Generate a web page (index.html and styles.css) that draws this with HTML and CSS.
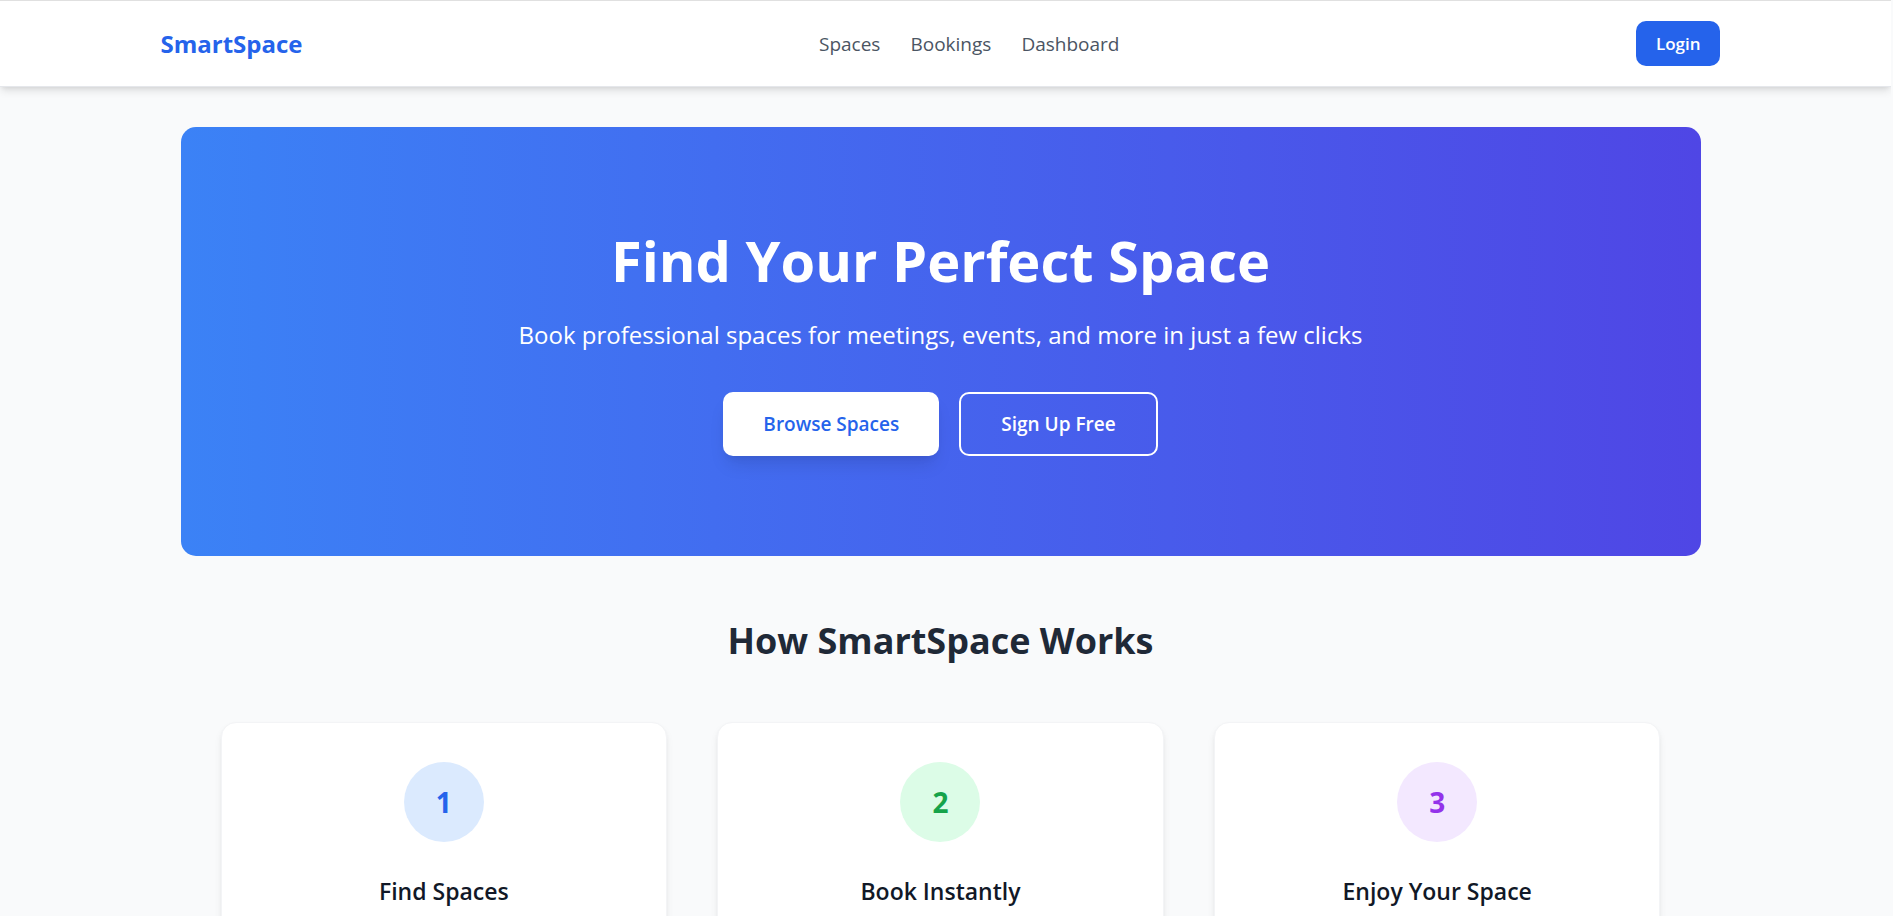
FILE: index.html
```html
<!DOCTYPE html>
<html lang="en">
<head>
<meta charset="utf-8">
<meta name="viewport" content="width=device-width, initial-scale=1">
<title>SmartSpace</title>
<link rel="stylesheet" href="styles.css">
</head>
<body>
<header class="navbar">
  <nav class="navbar-inner">
    <a class="brand" href="#">SmartSpace</a>
    <div class="nav-links">
      <a href="#">Spaces</a>
      <a href="#">Bookings</a>
      <a href="#">Dashboard</a>
    </div>
    <button class="login" type="button">Login</button>
  </nav>
</header>
<main class="container">
  <section class="hero">
    <h1>Find Your Perfect Space</h1>
    <p>Book professional spaces for meetings, events, and more in just a few clicks</p>
    <div class="hero-actions">
      <button class="btn btn-solid" type="button">Browse Spaces</button>
      <button class="btn btn-outline" type="button">Sign Up Free</button>
    </div>
  </section>
  <section class="steps">
    <h2>How SmartSpace Works</h2>
    <div class="step-grid">
      <article class="card">
        <div class="badge badge-blue">1</div>
        <h3>Find Spaces</h3>
      </article>
      <article class="card">
        <div class="badge badge-green">2</div>
        <h3>Book Instantly</h3>
      </article>
      <article class="card">
        <div class="badge badge-purple">3</div>
        <h3>Enjoy Your Space</h3>
      </article>
    </div>
  </section>
</main>
</body>
</html>
```
FILE: styles.css
```css
* {
  box-sizing: border-box;
  margin: 0;
}

html {
  background: #f9fafb;
  overflow: hidden;
}

body {
  margin-right: 2px;
  border-top: 1px solid #e0e0e0;
  background: #f9fafb;
  color: #111827;
  font-family: "Open Sans", "Noto Sans", sans-serif;
}

a {
  color: inherit;
  text-decoration: none;
}

button {
  border: 0;
  font-family: inherit;
  cursor: pointer;
}

.navbar {
  padding-right: 10px;
  border-bottom: 1px solid #e5e7eb;
  background: #fff;
  box-shadow: 0 5px 8px -1px rgba(0, 0, 0, 0.1), 0 2px 5px -2px rgba(0, 0, 0, 0.1);
}

.navbar-inner {
  display: flex;
  justify-content: space-between;
  align-items: center;
  max-width: 1600px;
  margin: 0 auto;
  padding: 20px;
}

.brand {
  color: #2563eb;
  font-size: 24px;
  font-weight: 700;
  line-height: 35px;
}

.nav-links {
  display: flex;
  gap: 30px;
  color: #4b5563;
  font-size: 19px;
  line-height: 30px;
}

.login {
  padding: 10px 20px;
  border-radius: 10px;
  background: #2563eb;
  color: #fff;
  font-size: 17px;
  font-weight: 600;
  line-height: 25px;
}

.container {
  padding: 40px 10px 40px 0;
}

.hero {
  max-width: 1520px;
  margin: 0 auto;
  padding: 100px 40px;
  border-radius: 15px;
  background: linear-gradient(to right, #3b82f6, #4f46e5);
  color: #fff;
  text-align: center;
}

.hero h1 {
  margin-bottom: 24px;
  font-size: 56px;
  font-weight: 700;
  line-height: 66px;
}

.hero p {
  margin-bottom: 40px;
  font-size: 24px;
  line-height: 35px;
}

.hero-actions {
  display: flex;
  justify-content: center;
  gap: 20px;
}

.btn {
  border-radius: 10px;
  padding: 16px 40px;
  font-size: 19px;
  font-weight: 600;
  line-height: 28px;
}

.btn-solid {
  background: #fff;
  color: #2563eb;
  box-shadow: 0 12px 18px -4px rgba(0, 0, 0, 0.1), 0 5px 8px -5px rgba(0, 0, 0, 0.1);
}

.btn-outline {
  border: 2px solid #fff;
  background: transparent;
  color: #fff;
}

.steps {
  max-width: 1520px;
  margin: 0 auto;
  padding: 60px 40px;
}

.steps h2 {
  margin-bottom: 56px;
  color: #1f2937;
  font-size: 36px;
  font-weight: 700;
  line-height: 50px;
  text-align: center;
}

.step-grid {
  display: grid;
  grid-template-columns: repeat(3, 1fr);
  gap: 50px;
}

.card {
  padding: 39px 40px 80px;
  border: 1px solid #f3f4f6;
  border-radius: 15px;
  background: #fff;
  box-shadow: 0 5px 8px -1px rgba(0, 0, 0, 0.08), 0 2px 5px -2px rgba(0, 0, 0, 0.08);
  text-align: center;
}

.badge {
  display: flex;
  justify-content: center;
  align-items: center;
  width: 80px;
  height: 80px;
  margin: 0 auto 32px;
  border-radius: 50%;
  font-size: 28px;
  font-weight: 700;
}

.badge-blue {
  background: #dbeafe;
  color: #2563eb;
}

.badge-green {
  background: #dcfce7;
  color: #16a34a;
}

.badge-purple {
  background: #f3e8ff;
  color: #9333ea;
}

.card h3 {
  font-size: 23px;
  font-weight: 600;
  line-height: 35px;
}
```
